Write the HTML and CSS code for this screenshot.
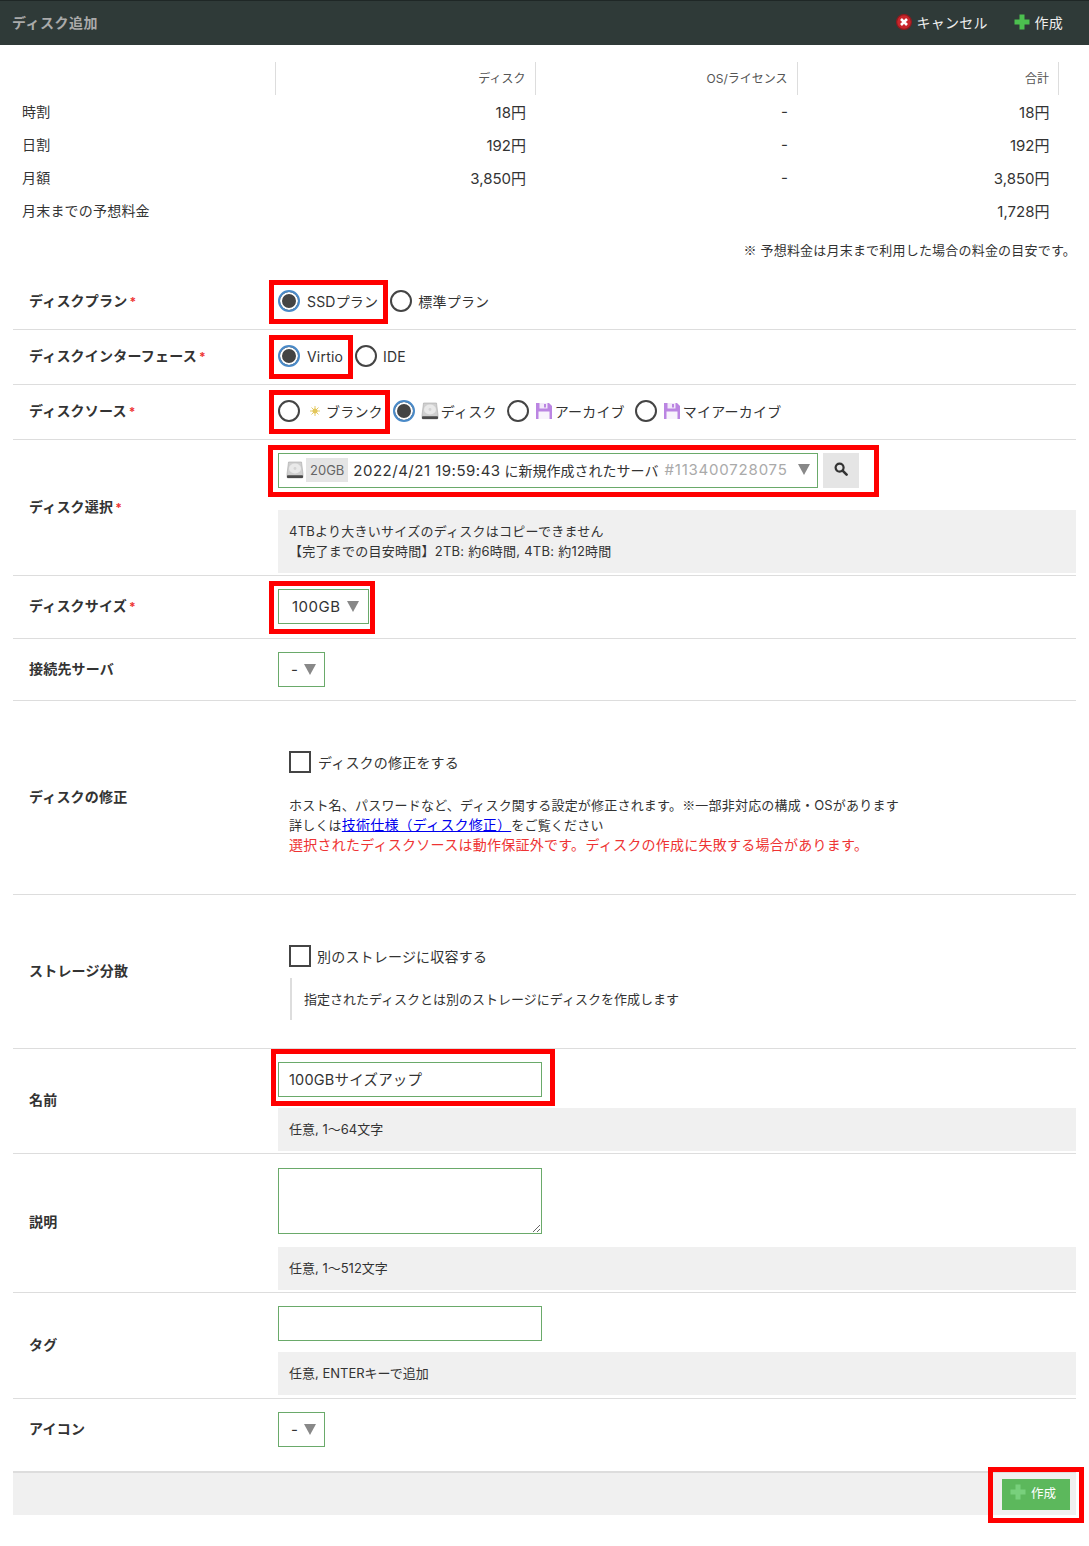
FILE: index.html
```html
<!DOCTYPE html>
<html lang="ja">
<head>
    <meta charset="UTF-8">
    <meta name="viewport" content="width=device-width, initial-scale=1.0">
    <title>ディスク追加</title>
    <link rel="stylesheet" href="styles.css">
</head>
<body>

    <svg class="icon-defs" width="0" height="0">
        <symbol id="icon-plus" viewBox="0 0 16 16">
            <path d="M5.5 0.5h5v5h5v5h-5v5h-5v-5h-5v-5h5z"/>
        </symbol>
        <symbol id="icon-disk" viewBox="0 0 18 18">
            <path d="M2.5 1h13l1.5 12v3a1 1 0 0 1-1 1H2a1 1 0 0 1-1-1v-3z" fill="#cfcfcf" stroke="#a8a8a8" stroke-width=".6"/>
            <ellipse cx="9" cy="7.5" rx="6" ry="5" fill="#e9e9e9"/>
            <circle cx="9" cy="7.5" r="1.4" fill="#d4d4d4"/>
            <rect x="1" y="14.2" width="16" height="2.8" rx=".8" fill="#4a4a4a"/>
        </symbol>
        <symbol id="icon-floppy" viewBox="0 0 18 18">
            <path d="M1 1h13l3 3v13H1z" fill="#bb85e2"/>
            <rect x="4.5" y="1" width="8" height="5.5" fill="#f3eafa"/>
            <rect x="9" y="2" width="2" height="3.5" fill="#bb85e2"/>
            <rect x="3.5" y="9.5" width="11" height="7.5" fill="#f8f3fc"/>
        </symbol>
    </svg>

    <header class="top-bar">
        <h1 class="top-title">ディスク追加</h1>
        <div class="top-actions">
            <a class="top-link">
                <svg class="icon-cancel" viewBox="0 0 16 16">
                    <circle cx="8" cy="8" r="7.4" fill="#c9252b" stroke="#8f1a1e" stroke-width="1.2"/>
                    <path d="M5 5l6 6M11 5l-6 6" stroke="#fff" stroke-width="2.6"/>
                </svg>
                キャンセル
            </a>
            <a class="top-link">
                <svg class="icon-plus"><use href="#icon-plus"/></svg>
                作成
            </a>
        </div>
    </header>

    <main class="content">
        <table class="price-table">
            <thead>
                <tr>
                    <th></th>
                    <th>ディスク</th>
                    <th>OS/ライセンス</th>
                    <th>合計</th>
                </tr>
            </thead>
            <tbody>
                <tr><td>時割</td><td>18円</td><td>-</td><td>18円</td></tr>
                <tr><td>日割</td><td>192円</td><td>-</td><td>192円</td></tr>
                <tr><td>月額</td><td>3,850円</td><td>-</td><td>3,850円</td></tr>
                <tr><td>月末までの予想料金</td><td></td><td></td><td>1,728円</td></tr>
            </tbody>
        </table>
        <p class="price-note"><span class="cjk">※</span> 予想料金は月末まで利用した場合の料金の目安です。</p>

        <form class="disk-form">
            <div class="row row-radio">
                <div class="row-label">ディスクプラン<span class="req">*</span></div>
                <div class="row-field radios">
                    <label class="choice mark mark-radio"><input type="radio" name="plan" checked><span>SSDプラン</span></label>
                    <label class="choice"><input type="radio" name="plan">標準プラン</label>
                </div>
            </div>

            <div class="row row-radio">
                <div class="row-label">ディスクインターフェース<span class="req">*</span></div>
                <div class="row-field radios">
                    <label class="choice mark mark-radio"><input type="radio" name="iface" checked><span>Virtio</span></label>
                    <label class="choice"><input type="radio" name="iface">IDE</label>
                </div>
            </div>

            <div class="row row-radio">
                <div class="row-label">ディスクソース<span class="req">*</span></div>
                <div class="row-field radios">
                    <label class="choice mark mark-radio mark-blank">
                        <input type="radio" name="source">
                        <svg class="icon-sun" viewBox="0 0 12 12">
                            <circle cx="6" cy="6" r="3" fill="#e3c65a"/>
                            <path d="M6 0v12M0 6h12M1.8 1.8l8.4 8.4M10.2 1.8l-8.4 8.4" stroke="#e3c65a" stroke-width="1.1"/>
                        </svg>
                        <span>ブランク</span>
                    </label>
                    <label class="choice"><input type="radio" name="source" checked><svg class="icon-small"><use href="#icon-disk"/></svg>ディスク</label>
                    <label class="choice gap-l"><input type="radio" name="source"><svg class="icon-small"><use href="#icon-floppy"/></svg>アーカイブ</label>
                    <label class="choice gap-l"><input type="radio" name="source"><svg class="icon-small"><use href="#icon-floppy"/></svg>マイアーカイブ</label>
                </div>
            </div>

            <div class="row">
                <div class="row-label">ディスク選択<span class="req">*</span></div>
                <div class="row-field field-help">
                    <div class="disk-pick mark mark-pick">
                        <div class="select select-wide">
                            <svg class="icon-small"><use href="#icon-disk"/></svg>
                            <span class="size-tag">20GB</span>
                            <span><span class="num">2022/4/21 19:59:43</span> に新規作成されたサーバ</span>
                            <span class="num muted">#113400728075</span>
                            <span class="arrow"></span>
                        </div>
                        <button type="button" class="search-btn" aria-label="検索">
                            <svg viewBox="0 0 14 14" width="14" height="14">
                                <circle cx="5.6" cy="5.6" r="4" fill="none" stroke="#333" stroke-width="2.2"/>
                                <path d="M8.6 8.6l4 4" stroke="#333" stroke-width="2.6" stroke-linecap="round"/>
                            </svg>
                        </button>
                    </div>
                    <div class="help help-tall">
                        4TBより大きいサイズのディスクはコピーできません<br>
                        【完了までの目安時間】2TB: 約6時間, 4TB: 約12時間
                    </div>
                </div>
            </div>

            <div class="row">
                <div class="row-label">ディスクサイズ<span class="req">*</span></div>
                <div class="row-field field-plain field-size">
                    <div class="select select-size mark mark-size">100GB<span class="arrow"></span></div>
                </div>
            </div>

            <div class="row">
                <div class="row-label">接続先サーバ</div>
                <div class="row-field field-plain">
                    <div class="select select-dash">-<span class="arrow"></span></div>
                </div>
            </div>

            <div class="row row-modify">
                <div class="row-label">ディスクの修正</div>
                <div class="row-field field-inset">
                    <label class="check"><input type="checkbox">ディスクの修正をする</label>
                    <p class="desc">
                        ホスト名、パスワードなど、ディスク関する設定が修正されます。<span class="cjk">※</span>一部非対応の構成・OSがあります<br>
                        詳しくは<a href="#" class="doc-link">技術仕様（ディスク修正）</a>をご覧ください<br>
                        <span class="warn">選択されたディスクソースは動作保証外です。ディスクの作成に失敗する場合があります。</span>
                    </p>
                </div>
            </div>

            <div class="row row-storage">
                <div class="row-label">ストレージ分散</div>
                <div class="row-field field-inset">
                    <label class="check check-tight"><input type="checkbox">別のストレージに収容する</label>
                    <div class="side-note">指定されたディスクとは別のストレージにディスクを作成します</div>
                </div>
            </div>

            <div class="row">
                <div class="row-label">名前</div>
                <div class="row-field field-help">
                    <div class="mark mark-name input-wrap"><input class="text-input" type="text" value="100GBサイズアップ"></div>
                    <div class="help">任意, 1〜64文字</div>
                </div>
            </div>

            <div class="row">
                <div class="row-label">説明</div>
                <div class="row-field field-help field-desc">
                    <textarea class="text-input text-area"></textarea>
                    <div class="help">任意, 1〜512文字</div>
                </div>
            </div>

            <div class="row">
                <div class="row-label">タグ</div>
                <div class="row-field field-help field-tag">
                    <input class="text-input" type="text">
                    <div class="help">任意, ENTERキーで追加</div>
                </div>
            </div>

            <div class="row row-last">
                <div class="row-label">アイコン</div>
                <div class="row-field field-plain">
                    <div class="select select-dash">-<span class="arrow"></span></div>
                </div>
            </div>

            <div class="form-foot">
                <button type="button" class="create-btn mark mark-create">
                    <svg class="icon-plus-dim"><use href="#icon-plus"/></svg>
                    作成
                </button>
            </div>
        </form>
    </main>

</body>
</html>
```

FILE: styles.css
```css
* {
    box-sizing: border-box;
}
body {
    margin: 0;
    background-color: #fff;
    color: #333;
    font-family: Inter, "Noto Sans CJK JP", sans-serif;
    font-size: 14px;
    letter-spacing: 0.2px;
}
.cjk {
    font-family: "Noto Sans CJK JP", sans-serif;
}
.icon-defs {
    position: absolute;
}

/* top bar */
.top-bar {
    height: 45px;
    display: flex;
    align-items: center;
    justify-content: space-between;
    padding: 0 26px 2px 12px;
    background-color: #2f3a38;
    border-top: 1px solid #1f2726;
}
.top-title {
    margin: 0;
    font-size: 14px;
    font-weight: bold;
    color: #aaa;
    letter-spacing: 0.5px;
}
.top-actions {
    display: flex;
    gap: 26px;
}
.top-link {
    display: flex;
    align-items: center;
    gap: 5px;
    color: #eee;
    font-size: 14px;
}
.icon-cancel {
    width: 16px;
    height: 16px;
}
.icon-plus {
    width: 16px;
    height: 16px;
    fill: #4cc04f;
}

/* price table */
.content {
    padding: 17px 13px 31px;
}
.price-table {
    width: 1046px;
    border-collapse: collapse;
    table-layout: fixed;
}
.price-table th {
    height: 33px;
    padding: 0 9px 2px;
    text-align: right;
    font-size: 12px;
    font-weight: normal;
    color: #555;
    letter-spacing: 0;
    border-right: 1px solid #ddd;
}
.price-table th:nth-child(1) {
    width: 262px;
}
.price-table th:nth-child(2) {
    width: 260px;
}
.price-table th:nth-child(3) {
    width: 262px;
}
.price-table td {
    height: 33px;
    padding: 0 9px;
    text-align: right;
    font-size: 15px;
    letter-spacing: 0;
    color: #333;
}
.price-table td:first-child {
    padding-bottom: 2px;
    text-align: left;
    font-size: 14px;
    letter-spacing: 0.2px;
}
.price-note {
    margin: 14px 0 0;
    height: 34px;
    text-align: right;
    font-size: 13px;
    line-height: 18px;
}

/* form rows */
.row {
    display: grid;
    grid-template-columns: 265px 1fr;
    align-items: center;
    border-bottom: 1px solid #ddd;
}
.row-label {
    padding: 0 0 4px 16px;
    font-weight: bold;
    color: #333;
}
.req {
    margin-left: 2px;
    color: #e33;
    font-size: 12px;
}
.row-radio {
    height: 55px;
}
.radios {
    display: flex;
    align-items: center;
    padding-bottom: 2px;
}
.choice {
    display: flex;
    align-items: center;
    height: 26px;
    white-space: nowrap;
}
.gap-l {
    margin-left: 10px;
}
.choice input {
    appearance: none;
    width: 22px;
    height: 22px;
    margin: 0 6px 0 0;
    flex: none;
    background: #fff;
    border: 2px solid #444;
    border-radius: 50%;
}
.choice input:checked {
    border-color: #4a8ac8;
    box-shadow: inset 0 0 0 2px #fff;
    background-color: #444;
}
.mark {
    position: relative;
}
.mark::after {
    content: "";
    position: absolute;
    border: 5px solid #f00;
    pointer-events: none;
}
.mark-radio {
    margin-right: 7px;
    padding-right: 5px;
}
.mark-radio input {
    margin-right: 7px;
}
.mark-radio::after {
    inset: -8px -5px -10px -9px;
}
.mark-blank {
    margin-right: 8px;
    padding-right: 2px;
}
.icon-small {
    width: 18px;
    height: 18px;
    margin-right: 2px;
    flex: none;
}
.icon-sun {
    width: 10px;
    height: 10px;
    margin: 0 6px 0 3px;
}

.field-help {
    padding: 13px 0 2px;
}
.field-desc {
    padding-top: 14px;
}
.field-tag {
    padding-bottom: 3px;
}
.field-plain {
    padding: 13px 0 13px;
}
.field-size {
    padding-bottom: 14px;
}
.disk-pick {
    display: flex;
    gap: 5px;
    width: 581px;
}
.mark-pick::after {
    inset: -8px -20px -9px -10px;
}
.select {
    display: flex;
    align-items: center;
    height: 35px;
    border: 1px solid #6aaa6a;
    background: #fff;
    font-size: 15px;
    letter-spacing: 0;
    white-space: nowrap;
}
.select-wide {
    width: 540px;
    padding: 0 0 2px 7px;
    gap: 4px;
    font-size: 14px;
}
.select-wide .icon-small {
    margin-right: -2px;
}
.num {
    font-size: 15px;
    letter-spacing: 0.5px;
}
.select-size {
    width: 91px;
    padding-left: 13px;
    letter-spacing: 0.5px;
}
.mark-size::after {
    inset: -9px -7px -11px -10px;
}
.select-dash {
    width: 47px;
    padding-left: 12px;
}
.arrow {
    width: 0;
    height: 0;
    margin-left: 6px;
    border-left: 6px solid transparent;
    border-right: 6px solid transparent;
    border-top: 11px solid #888;
}
.size-tag {
    margin-right: 1px;
    padding: 4px;
    background-color: #e5e5e5;
    color: #666;
    font-size: 13px;
    line-height: 16px;
}
.muted {
    margin-left: 2px;
    color: #aaa;
    letter-spacing: 0.8px;
}
.search-btn {
    width: 36px;
    height: 35px;
    padding: 0;
    border: none;
    background-color: #e5e5e5;
}
.help {
    height: 43px;
    margin-top: 11px;
    padding: 0 11px;
    background-color: #f0f0f0;
    font-size: 13px;
    letter-spacing: 0;
    line-height: 43px;
}
.help-tall {
    height: 63px;
    margin-top: 22px;
    padding-top: 11px;
    letter-spacing: 0.25px;
    line-height: 20px;
}
.field-desc .help {
    margin-top: 13px;
}

/* modify and storage rows */
.row-modify {
    height: 194px;
}
.row-modify .field-inset {
    padding-top: 10px;
}
.row-storage {
    height: 154px;
}
.row-storage .field-inset {
    padding-top: 22px;
}
.field-inset {
    padding-left: 11px;
}
.check {
    display: flex;
    align-items: center;
    gap: 7px;
}
.check-tight {
    gap: 6px;
}
.check input {
    appearance: none;
    width: 22px;
    height: 22px;
    margin: 0;
    background: #fff;
    border: 2px solid #444;
}
.desc {
    margin: 22px 0 0;
    font-size: 13px;
    letter-spacing: 0.2px;
    line-height: 20px;
}
.doc-link {
    color: #00e;
    font-size: 14px;
}
.warn {
    color: #e33;
    font-size: 14px;
    letter-spacing: 0.26px;
}
.side-note {
    margin-top: 11px;
    margin-left: 1px;
    height: 42px;
    padding-left: 12px;
    border-left: 2px solid #ddd;
    font-size: 13px;
    letter-spacing: 0;
    line-height: 42px;
}

/* text inputs */
.input-wrap {
    width: 264px;
}
.text-input {
    display: block;
    width: 264px;
    height: 35px;
    padding: 0 10px 2px;
    border: 1px solid #6aaa6a;
    border-radius: 0;
    outline: none;
    font-family: inherit;
    font-size: 14.5px;
    letter-spacing: 0.2px;
    color: #333;
}
.text-area {
    height: 66px;
}
.mark-name::after {
    inset: -13px -13px -9px -7px;
}
.row-last {
    border-bottom: none;
}
.row-last .row-label {
    padding-bottom: 15px;
}
.row-last .field-plain {
    padding-bottom: 24px;
}

/* footer */
.form-foot {
    display: flex;
    justify-content: flex-end;
    height: 44px;
    padding: 6px 6px 0 0;
    background-color: #f0f0f0;
    border-top: 2px solid #ddd;
}
.create-btn {
    display: flex;
    align-items: center;
    justify-content: center;
    gap: 5px;
    width: 68px;
    height: 31px;
    padding: 0 6px 5px 0;
    border: none;
    background-color: #5cb85c;
    color: #fff;
    font-family: inherit;
    font-size: 12.5px;
    letter-spacing: 0;
}
.icon-plus-dim {
    width: 16px;
    height: 16px;
    fill: #78d07c;
}
.mark-create::after {
    inset: -12px -14px -13px -14px;
}
```
